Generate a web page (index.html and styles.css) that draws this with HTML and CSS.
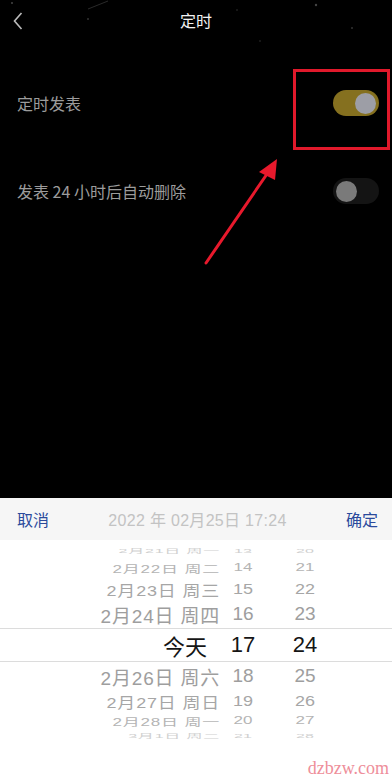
FILE: index.html
```html
<!DOCTYPE html>
<html lang="zh-CN">
<head>
<meta charset="utf-8">
<link rel="stylesheet" href="styles.css">
</head>
<body>
<div class="screen">
  <div class="top">
    <svg class="stars" width="392" height="497" viewBox="0 0 392 497">
      <line x1="88" y1="9" x2="108" y2="1" stroke="#2a2a2a" stroke-width="1"/>
      <circle cx="12" cy="3" r="1" fill="#444"/>
      <circle cx="88" cy="19" r="1" fill="#333"/>
      <circle cx="237" cy="10" r="0.8" fill="#333"/>
      <circle cx="316" cy="5" r="1.2" fill="#444"/>
      <circle cx="260" cy="41" r="0.8" fill="#333"/>
      <circle cx="352" cy="28" r="1" fill="#333"/>
    </svg>
    <div class="nav">
      <svg class="back" width="10" height="18" viewBox="0 0 10 18"><path d="M8.5 1 L1.5 9 L8.5 17" fill="none" stroke="#bbb" stroke-width="1.6"/></svg>
      <div class="title">定时</div>
    </div>
    <div class="list">
      <div class="row">
        <span class="label">定时发表</span>
        <span class="switch on"><span class="knob"></span></span>
      </div>
      <div class="row">
        <span class="label">发表 24 小时后自动删除</span>
        <span class="switch off"><span class="knob"></span></span>
      </div>
    </div>
  </div>
  <div class="sheet">
    <div class="toolbar">
      <span class="btn">取消</span>
      <span class="current">2022 年 02月25日 17:24</span>
      <span class="btn">确定</span>
    </div>
    <div class="picker">
      <div class="prow p3"><span class="d">2月21日 周一</span><span class="h">13</span><span class="m">20</span></div>
      <div class="prow p2"><span class="d">2月22日 周二</span><span class="h">14</span><span class="m">21</span></div>
      <div class="prow p1"><span class="d">2月23日 周三</span><span class="h">15</span><span class="m">22</span></div>
      <div class="prow p0"><span class="d">2月24日 周四</span><span class="h">16</span><span class="m">23</span></div>
      <div class="prow sel"><span class="d">今天</span><span class="h">17</span><span class="m">24</span></div>
      <div class="prow p0"><span class="d">2月26日 周六</span><span class="h">18</span><span class="m">25</span></div>
      <div class="prow p1"><span class="d">2月27日 周日</span><span class="h">19</span><span class="m">26</span></div>
      <div class="prow p2b"><span class="d">2月28日 周一</span><span class="h">20</span><span class="m">27</span></div>
      <div class="prow p3b"><span class="d">3月1日 周二</span><span class="h">21</span><span class="m">28</span></div>
    </div>
  </div>
  <div class="highlight"></div>
  <svg class="arrow" width="392" height="300" viewBox="0 0 392 300">
    <line x1="206" y1="263" x2="267" y2="174" stroke="#e8192c" stroke-width="3" stroke-linecap="round"/>
    <polygon points="277,159 259,172 275,180" fill="#e8192c"/>
  </svg>
  <div class="watermark">dzbzw.com</div>
</div>
</body>
</html>
```
FILE: styles.css
```css
* { box-sizing: border-box; }
html, body { margin: 0; padding: 0; background: #000; }
body { font-family: "Noto Sans CJK SC", "Liberation Sans", sans-serif; }
.screen { position: relative; width: 392px; height: 780px; display: flex; flex-direction: column; overflow: hidden; }
.top { position: relative; height: 498px; background: #000; }
.stars { position: absolute; left: 0; top: 0; }
.nav { position: relative; height: 40px; display: flex; align-items: center; justify-content: center; }
.back { position: absolute; left: 13px; top: 12px; }
.title { color: #f2f2f2; font-size: 16px; line-height: 20px; }
.list { padding-top: 19px; }
.row { height: 88px; display: flex; align-items: center; justify-content: space-between; padding: 0 13px 0 17px; }
.label { color: #9c9c9c; font-size: 16px; line-height: 20px; }
.switch { width: 46px; height: 26px; border-radius: 13px; display: flex; align-items: center; padding: 0 3px; }
.switch.on { background: #85701f; justify-content: flex-end; }
.switch.off { background: #141414; justify-content: flex-start; }
.knob { width: 21px; height: 21px; border-radius: 50%; }
.on .knob { background: #9d9ea6; }
.off .knob { background: #7a7a7a; }
.sheet { flex: 1; background: #fff; display: flex; flex-direction: column; }
.toolbar { height: 42px; background: #f6f6f6; display: flex; align-items: center; justify-content: space-between; padding: 0 14px 0 17px; }
.btn { color: #2b4a9c; font-size: 16px; }
.current { color: #c3c3c3; font-size: 16px; letter-spacing: 0.3px; font-family: "Liberation Sans", "Noto Sans CJK SC", sans-serif; }
.picker { padding-top: 4px; font-family: "Liberation Sans", "Noto Sans CJK SC", sans-serif; }
.prow { display: flex; align-items: center; overflow: hidden; white-space: nowrap; }
.prow .d { width: 221px; text-align: right; padding-right: 1px; letter-spacing: 0.8px; }
.prow .h { width: 44px; text-align: center; }
.prow .m { width: 62px; padding-left: 18px; text-align: center; }
.prow span { display: block; }
.p3 { height: 14px; font-size: 16px; color: #d0d0d0; }
.p3 span, .p3b span { transform: scaleY(0.35); }
.p3b { height: 12px; font-size: 16px; color: #d0d0d0; }
.p2 { height: 20px; font-size: 17px; color: #b4b4b4; }
.p2 span, .p2b span { transform: scaleY(0.6); }
.p2b { height: 18px; font-size: 17px; color: #b4b4b4; }
.p1 { height: 22px; font-size: 18px; color: #a6a6a6; }
.p1 span { transform: scaleY(0.85); }
.p0 { height: 28px; font-size: 19px; color: #9e9e9e; }
.sel { height: 34px; font-size: 22px; color: #151515; border-top: 1px solid #dcdcdc; border-bottom: 1px solid #dcdcdc; }
.sel .d { font-family: "Noto Sans CJK SC", sans-serif; padding-right: 14px; letter-spacing: 0; }
.highlight { position: absolute; left: 293px; top: 69px; width: 97px; height: 81px; border: 3px solid #e0192b; }
.arrow { position: absolute; left: 0; top: 0; }
.watermark { position: absolute; right: 3px; bottom: 2px; color: #ee8e9a; font-family: "Liberation Serif", serif; font-size: 18px; line-height: 20px; }
```
